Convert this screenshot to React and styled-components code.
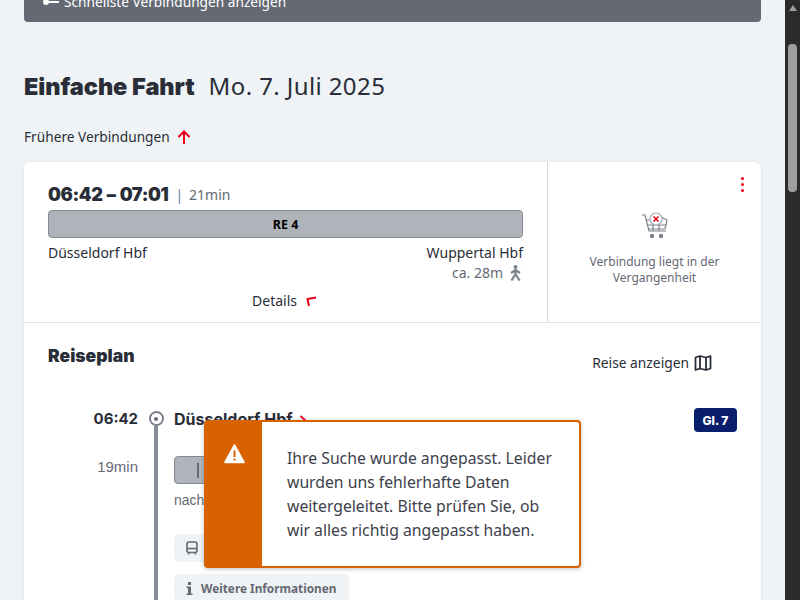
import styled, { createGlobalStyle } from "styled-components";

const GlobalStyle = createGlobalStyle`
  html, body { margin: 0; padding: 0; overflow: hidden; }
  body { font-family: "Noto Sans", "Liberation Sans", sans-serif; color: #282d37; background: #f0f3f5; }
`

const Page = styled.div`
  width: 800px;
  height: 600px;
  display: flex;
  overflow: hidden;
  position: relative;
`
const Main = styled.main`
  flex: 1;
  min-width: 0;
  padding: 0 24px;
  overflow: hidden;
`
const Scrollbar = styled.div`
  width: 15px;
  background: #2b2b2b;
  display: flex;
  flex-direction: column;
  align-items: center;
  .arrow {
    margin-top: 5px;
    width: 0;
    height: 0;
    border-left: 4.5px solid transparent;
    border-right: 4.5px solid transparent;
    border-bottom: 6px solid #9f9f9f;
  }
  .thumb {
    margin-top: 33px;
    width: 9px;
    height: 148px;
    background: #9f9f9f;
    border-radius: 4px;
  }
`
const TopBar = styled.div`
  height: 22px;
  box-sizing: border-box;
  background: #646973;
  border-radius: 0 0 4px 4px;
  color: #fff;
  font-size: 13.7px;
  line-height: 20px;
  padding: 0 0 10px 18px;
  display: flex;
  align-items: flex-end;
  gap: 5px;
  white-space: nowrap;
  svg { margin-bottom: 6px; }
`
const Title = styled.h1`
  margin: 49px 0 0;
  font-size: 24px;
  line-height: 30px;
  font-weight: 400;
  letter-spacing: 0.4px;
  b {
    font-family: Inter, sans-serif;
    font-weight: 900;
    font-size: 23.5px;
    letter-spacing: -0.05px;
    margin-right: 14px;
  }
`
const EarlierLink = styled.div`
  margin-top: 25px;
  font-size: 13.7px;
  line-height: 20px;
  display: flex;
  align-items: center;
  gap: 7px;
`
const Card = styled.section`
  margin-top: 15px;
  background: #fff;
  border-radius: 6px 6px 0 0;
  box-shadow: 0 0 3px rgba(40, 45, 55, 0.1);
  height: 600px;
`
const Summary = styled.div`
  display: grid;
  grid-template-columns: 1fr 213px;
  height: 161px;
  box-sizing: border-box;
  border-bottom: 1px solid #dfe1e6;
`
const Connection = styled.div`
  padding: 20px 24px 0;
  border-right: 1px solid #d7d9de;
`
const TimeLine = styled.div`
  display: flex;
  align-items: center;
  height: 24px;
  margin-bottom: 4px;
  font-size: 14px;
  color: #646973;
  b {
    font-family: Inter, sans-serif;
    font-weight: 900;
    font-size: 18.2px;
    color: #282d37;
    letter-spacing: -0.4px;
    word-spacing: 1px;
  }
  i {
    font-style: normal;
    color: #5f7ea0;
    margin: 0 6px 0 7px;
  }
`
const TrainBar = styled.div`
  box-sizing: border-box;
  height: 28px;
  width: ${(p) => p.$width || "100%"};
  margin-top: ${(p) => p.$top || 0}px;
  padding-left: ${(p) => (p.$start ? "22px" : "0")};
  background: #afb4bb;
  border: 1px solid #868a93;
  border-radius: 4px;
  display: flex;
  align-items: center;
  justify-content: ${(p) => (p.$start ? "flex-start" : "center")};
  font-size: 12.5px;
  font-weight: 700;
  color: #000;
`
const BarDivider = styled.span`
  width: 2px;
  height: 15px;
  background: #646973;
`
const Stations = styled.div`
  margin-top: 5px;
  display: flex;
  justify-content: space-between;
  font-size: 14px;
  line-height: 20px;
`
const Walk = styled.div`
  display: flex;
  justify-content: flex-end;
  align-items: center;
  gap: 7px;
  padding-right: 2px;
  font-size: 14px;
  line-height: 20px;
  color: #646973;
`
const DetailsLink = styled.div`
  margin-top: 8px;
  padding-right: 2px;
  display: flex;
  justify-content: center;
  align-items: center;
  gap: 9px;
  font-size: 14px;
  line-height: 20px;
`
const Booking = styled.div`
  position: relative;
  display: flex;
  flex-direction: column;
  align-items: center;
  padding-top: 49px;
  text-align: center;
  font-size: 12px;
  line-height: 16px;
  color: #646973;
  p { margin: 15px 0 0; width: 150px; }
`
const MoreButton = styled.div`
  position: absolute;
  top: 15px;
  right: 17px;
  width: 3px;
  display: flex;
  flex-direction: column;
  gap: 3px;
  span { height: 3px; border-radius: 50%; background: #ec0016; }
`
const PlanHeader = styled.div`
  display: flex;
  justify-content: space-between;
  padding: 21px 49px 0 24px;
  height: 85px;
  box-sizing: border-box;
`
const PlanTitle = styled.h2`
  margin: 0;
  font-family: Inter, sans-serif;
  font-weight: 900;
  font-size: 17.5px;
  line-height: 24px;
`
const ShowTrip = styled.div`
  margin-top: 9px;
  display: flex;
  align-items: center;
  gap: 5px;
  font-size: 13.8px;
  line-height: 20px;
  height: 20px;
`
const PlanRow = styled.div`
  display: grid;
  grid-template-columns: 114px 36px 1fr;
  padding-right: 24px;
`
const Times = styled.div`
  text-align: right;
  font-family: "Liberation Sans", sans-serif;
  font-size: 15px;
  color: #646973;
  b {
    display: block;
    font-family: Inter, sans-serif;
    font-weight: 700;
    font-size: 15px;
    line-height: 22px;
    color: #282d37;
  }
  span { display: block; margin-top: 26px; line-height: 22px; }
`
const Rail = styled.div`
  display: flex;
  flex-direction: column;
  align-items: center;
  padding-top: 3px;
  height: 200px;
  .stop {
    width: 11px;
    height: 11px;
    border: 2px solid #7c808a;
    border-radius: 50%;
    position: relative;
    background: #fff;
  }
  .stop::after {
    content: "";
    position: absolute;
    inset: 3.5px;
    border-radius: 50%;
    background: #646973;
  }
  .line { width: 4px; flex: 1; background: #878c96; }
`
const StopHead = styled.div`
  display: flex;
  justify-content: space-between;
  height: 22px;
  b {
    font-family: Inter, sans-serif;
    font-weight: 700;
    font-size: 16px;
    line-height: 22px;
  }
  svg { margin-left: 6px; vertical-align: -1px; }
`
const Platform = styled.span`
  margin-top: 0;
  width: 43px;
  height: 24px;
  border-radius: 4px;
  background: #0a1e6e;
  color: #fff;
  font-family: Inter, sans-serif;
  font-weight: 800;
  font-size: 12px;
  display: flex;
  align-items: center;
  justify-content: center;
`
const Direction = styled.div`
  margin-top: 6px;
  font-family: "Liberation Sans", sans-serif;
  font-size: 14px;
  line-height: 20px;
  color: #646973;
`
const Chip = styled.div`
  margin-top: ${(p) => p.$gap}px;
  width: fit-content;
  height: 28px;
  box-sizing: border-box;
  padding: 0 12px 0 12px;
  background: #f0f3f5;
  border-radius: 5px;
  display: flex;
  align-items: center;
  gap: 8px;
  font-family: "Noto Sans", sans-serif;
  font-size: 11.8px;
  font-weight: 700;
  color: #646973;
`
const Toast = styled.div`
  position: absolute;
  left: 204px;
  top: 420px;
  width: 377px;
  height: 148px;
  box-sizing: border-box;
  display: flex;
  border: 2px solid #d96200;
  border-radius: 4px;
  background: #fff;
  box-shadow: 0 1px 4px rgba(40, 45, 55, 0.3);
`
const ToastSide = styled.div`
  flex: 0 0 56px;
  background: #d96200;
  display: flex;
  justify-content: center;
  align-items: flex-start;
  padding-top: 22px;
  box-sizing: border-box;
`
const ToastText = styled.p`
  margin: 0;
  padding: 24px 20px 0 25px;
  font-size: 15.75px;
  line-height: 24px;
  color: #3c414b;
`

const ArrowUp = () => (
  <svg width="14" height="14" viewBox="0 0 14 14" fill="none" stroke="#ec0016" strokeWidth="2">
    <path d="M7 14V1.5M1.5 7L7 1.5L12.5 7" />
  </svg>
)

const KeyIcon = () => (
  <svg width="17" height="8" viewBox="0 0 17 8" fill="#fff">
    <circle cx="4" cy="4" r="3" />
    <rect x="6" y="3" width="11" height="2" />
  </svg>
)

const WalkIcon = () => (
  <svg width="11" height="16" viewBox="0 0 11 16" fill="none" stroke="#7c808a" strokeWidth="2.2">
    <circle cx="5.5" cy="2" r="2" fill="#7c808a" stroke="none" />
    <path d="M1 8L5.5 5L10 8M5.5 5V9L1.5 15.5M5.5 9L9.5 15.5" />
  </svg>
)

const CartIcon = () => (
  <svg width="28" height="28" viewBox="0 0 28 28" fill="none" stroke="#7c808a" strokeWidth="1.2">
    <path d="M1 4H4L8 20H25" />
    <path d="M5 9H11M6 14H25L24 18H8M12 14V20M18 14V20" />
    <path d="M20 6L26 9L25 14" />
    <circle cx="15" cy="8" r="6" fill="#fff" stroke="#a8acb3" />
    <path d="M12.5 5.5L17.5 10.5M17.5 5.5L12.5 10.5" stroke="#ec0016" strokeWidth="1.6" />
    <circle cx="11" cy="25" r="2.2" fill="#7c808a" stroke="none" />
    <circle cx="20" cy="25" r="2.2" fill="#7c808a" stroke="none" />
  </svg>
)

const MapIcon = () => (
  <svg width="18" height="16" viewBox="0 0 18 16" fill="none" stroke="#282d37" strokeWidth="1.8" strokeLinejoin="round">
    <path d="M1.5 2.5L6 1L12 2.5L16.5 1V13.5L12 15L6 13.5L1.5 15Z" />
    <path d="M6 1V13.5M12 2.5V15" />
  </svg>
)

const BusIcon = () => (
  <svg width="12" height="14" viewBox="0 0 12 14" fill="none" stroke="#646973" strokeWidth="1.6">
    <rect x="1" y="1" width="10" height="10.5" rx="2" />
    <path d="M1 7.5H11" />
    <path d="M2.5 12V13.5M9.5 12V13.5" />
  </svg>
)

const InfoIcon = () => (
  <svg width="7" height="13" viewBox="0 0 7 13" fill="#646973">
    <rect x="2" y="0" width="3" height="3" />
    <path d="M.5 4.5H5V11.5H6.5V13H.5V11.5H2V6H.5Z" />
  </svg>
)

const WarningIcon = () => (
  <svg width="21" height="20" viewBox="0 0 21 20">
    <path d="M10.5 1L20 18.5H1Z" fill="#fff" stroke="#fff" strokeWidth="1.6" strokeLinejoin="round" />
    <rect x="9.5" y="6.5" width="2" height="6.5" fill="#d96200" />
    <rect x="9.5" y="14.5" width="2" height="2" fill="#d96200" />
  </svg>
)

const App = () => {
  return (
    <Page>
      <GlobalStyle />
      <Main>
        <TopBar>
          <KeyIcon />
          Schnellste Verbindungen anzeigen
        </TopBar>
        <Title><b>Einfache Fahrt</b>Mo. 7. Juli 2025</Title>
        <EarlierLink>Frühere Verbindungen <ArrowUp /></EarlierLink>
        <Card>
          <Summary>
            <Connection>
              <TimeLine><b>06:42 – 07:01</b><i>|</i>21min</TimeLine>
              <TrainBar>RE 4</TrainBar>
              <Stations><span>Düsseldorf Hbf</span><span>Wuppertal Hbf</span></Stations>
              <Walk>ca. 28m <WalkIcon /></Walk>
              <DetailsLink>
                Details
                <svg width="11" height="11" viewBox="0 0 11 11" fill="none" stroke="#ec0016" strokeWidth="2">
                  <path d="M3 10L1.5 3L10 1.5" />
                </svg>
              </DetailsLink>
            </Connection>
            <Booking>
              <MoreButton><span /><span /><span /></MoreButton>
              <CartIcon />
              <p>Verbindung liegt in der Vergangenheit</p>
            </Booking>
          </Summary>
          <PlanHeader>
            <PlanTitle>Reiseplan</PlanTitle>
            <ShowTrip>Reise anzeigen <MapIcon /></ShowTrip>
          </PlanHeader>
          <PlanRow>
            <Times>
              <b>06:42</b>
              <span>19min</span>
            </Times>
            <Rail><div className="stop" /><div className="line" /></Rail>
            <div>
              <StopHead>
                <b>
                  Düsseldorf Hbf
                  <svg width="8" height="11" viewBox="0 0 8 11" fill="none" stroke="#ec0016" strokeWidth="1.8">
                    <path d="M1.5 1L6.5 5.5L1.5 10" />
                  </svg>
                </b>
                <Platform>Gl. 7</Platform>
              </StopHead>
              <TrainBar $width="300px" $top={26} $start><BarDivider /></TrainBar>
              <Direction>nach Wuppertal Hbf</Direction>
              <Chip $gap={24}><BusIcon /></Chip>
              <Chip $gap={12}><InfoIcon />Weitere Informationen</Chip>
            </div>
          </PlanRow>
        </Card>
      </Main>
      <Scrollbar>
        <div className="arrow" />
        <div className="thumb" />
      </Scrollbar>
      <Toast>
        <ToastSide><WarningIcon /></ToastSide>
        <ToastText>
          Ihre Suche wurde angepasst. Leider wurden uns fehlerhafte Daten weitergeleitet. Bitte prüfen Sie, ob wir alles richtig angepasst haben.
        </ToastText>
      </Toast>
    </Page>
  )
}

export default App
